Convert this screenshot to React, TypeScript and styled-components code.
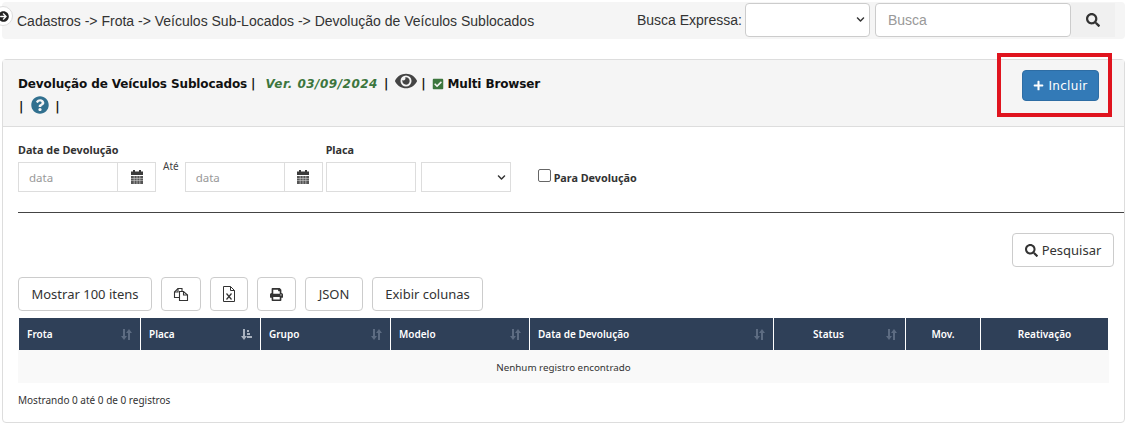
import styled, { createGlobalStyle } from "styled-components";
import {
  FaArrowCircleRight,
  FaCheckSquare,
  FaChevronDown,
  FaEye,
  FaPlus,
  FaPrint,
  FaQuestionCircle,
  FaSearch,
} from "react-icons/fa";

const GlobalStyle = createGlobalStyle`
  html, body {
    margin: 0;
    padding: 0;
    background: #fff;
    overflow: hidden;
  }
  * {
    box-sizing: border-box;
  }
`;

const Page = styled.div`
  position: relative;
  width: 1129px;
  height: 429px;
  padding: 2px 4px 0 2px;
  font-family: "Liberation Sans", Arial, sans-serif;
  color: #333;
`;

// Top breadcrumb bar
const TopBar = styled.div`
  height: 37px;
  background: #f5f5f5;
  border-radius: 4px;
  display: flex;
  align-items: center;
  padding: 0 10px 0 15px;
  font-size: 14px;
`;

const Crumbs = styled.div`
  flex: 1;
`;

const BackBadge = styled.span`
  position: absolute;
  left: -7px;
  top: 6px;
  width: 20px;
  height: 20px;
  border-radius: 50%;
  background: #fff;
  border: 1px solid #ddd;
  display: flex;
  align-items: center;
  justify-content: center;
  font-size: 11px;
  color: #222;
`;

const QuickLabel = styled.span`
  margin-right: 3px;
  margin-top: -2px;
`;

const TopSelect = styled.div`
  width: 125px;
  height: 34px;
  margin-top: -2px;
  background: #fff;
  border: 1px solid #ccc;
  border-radius: 4px;
  display: flex;
  align-items: center;
  justify-content: flex-end;
  padding-right: 4px;
  font-size: 9px;
  color: #333;
`;

const TopInput = styled.div`
  width: 196px;
  height: 34px;
  margin: -2px 0 0 5px;
  background: #fff;
  border: 1px solid #ccc;
  border-radius: 4px;
  padding: 0 12px;
  line-height: 33px;
  color: #999;
`;

const TopSearch = styled.div`
  width: 44px;
  height: 34px;
  margin-top: -2px;
  display: flex;
  align-items: center;
  justify-content: center;
  background: #f0f0f0;
  font-size: 14px;
  color: #333;
`;

// Main panel
const Panel = styled.section`
  margin-top: 20px;
  height: 364px;
  border: 1px solid #ddd;
  border-radius: 4px;
  background: #fff;
`;

const PanelHead = styled.header`
  height: 67px;
  background: #f5f5f5;
  border-bottom: 1px solid #ddd;
  display: flex;
  justify-content: space-between;
  padding: 10px 25px 0 15px;
`;

const TitleArea = styled.div`
  font-family: "DejaVu Sans", Verdana, sans-serif;
  font-size: 12px;
  font-weight: 700;
  color: #111;
  letter-spacing: -0.12px;
  white-space: nowrap;
`;

const TitleRow = styled.div<{ $short?: boolean }>`
  display: flex;
  align-items: center;
  gap: 6px;
  height: ${(p) => (p.$short ? 19 : 27)}px;
  padding-left: ${(p) => (p.$short ? 1 : 0)}px;
`;

const Version = styled.span`
  color: #3c763d;
  font-style: italic;
  letter-spacing: 0.5px;
  margin: 0 0 0 4px;
`;

const EyeIcon = styled(FaEye)`
  font-size: 22px;
  color: #444;
  margin: -6px -2px 0 1px;
`;

const CheckIcon = styled(FaCheckSquare)`
  font-size: 12px;
  color: #3c763d;
  margin: 0 -3px 0 1px;
`;

const HelpIcon = styled(FaQuestionCircle)`
  font-size: 18px;
  color: #31708f;
  margin: -3px 0 0 2px;
`;

const IncludeButton = styled.button`
  width: 77px;
  height: 31px;
  background: #337ab7;
  border: 1px solid #2e6da4;
  border-radius: 4px;
  color: #fff;
  font-family: "DejaVu Sans", Tahoma, sans-serif;
  font-size: 12px;
  letter-spacing: 0.3px;
  display: flex;
  align-items: center;
  justify-content: center;
  gap: 4px;
  padding: 0;

  svg {
    font-size: 11px;
  }
`;

const Highlight = styled.div`
  position: absolute;
  left: 997px;
  top: 53px;
  width: 115px;
  height: 64px;
  border: 4px solid #e0141e;
`;

const PanelBody = styled.div`
  padding: 16px 15px 0;
  font-family: "Noto Sans", Tahoma, sans-serif;
`;

// Filter form
const FilterRow = styled.div`
  display: flex;
  align-items: flex-start;
  height: 70px;
  border-bottom: 1px solid #444;
  margin-right: -15px;
`;

const Field = styled.div<{ $left?: number }>`
  margin-left: ${(p) => p.$left ?? 0}px;
`;

const FieldLabel = styled.div`
  height: 19px;
  font-size: 10.8px;
  font-weight: 700;
  color: #333;
  line-height: 14px;
`;

const InputRow = styled.div`
  display: flex;
`;

const DateText = styled.div`
  width: 99px;
  height: 30px;
  border: 1px solid #ddd;
  border-right: 0;
  color: #999;
  font-size: 11.5px;
  line-height: 29px;
  padding-left: 10px;
`;

const DateAddon = styled.div`
  width: 39px;
  height: 30px;
  border: 1px solid #ddd;
  display: flex;
  align-items: center;
  justify-content: center;
`;

const Until = styled.div`
  margin: 17px 6px 0 7px;
  font-size: 10px;
  line-height: 12px;
  color: #444;
`;

const PlateInput = styled.div`
  width: 90px;
  height: 30px;
  border: 1px solid #ddd;
`;

const PlateSelect = styled.div`
  width: 90px;
  height: 30px;
  margin-left: 5px;
  border: 1px solid #ddd;
  display: flex;
  align-items: center;
  justify-content: flex-end;
  padding-right: 4px;
  font-size: 9px;
  color: #333;
`;

const CheckLabel = styled.label`
  margin: 26px 0 0 27px;
  display: flex;
  align-items: flex-start;
  gap: 3px;
  font-size: 10.8px;
  font-weight: 700;
  color: #333;
  line-height: 18px;
`;

const CheckBox = styled.span`
  width: 13px;
  height: 13px;
  border: 1px solid #666;
  border-radius: 2px;
  background: #fff;
`;

const SearchRow = styled.div`
  display: flex;
  justify-content: flex-end;
  margin: 20px -5px 0 0;
`;

const OutlineButton = styled.button<{ $width?: number }>`
  width: ${(p) => (p.$width ? `${p.$width}px` : "auto")};
  height: 34px;
  background: #fff;
  border: 1px solid #ccc;
  border-radius: 4px;
  padding: 0 12px;
  display: flex;
  align-items: center;
  justify-content: center;
  gap: 4px;
  font-family: "Noto Sans", Tahoma, sans-serif;
  font-size: 13px;
  color: #333;
  white-space: nowrap;

  svg {
    font-size: 13px;
    flex: none;
  }
`;

const Toolbar = styled.div`
  display: flex;
  gap: 9px;
  margin-top: 10px;
`;

// Table
const Table = styled.table`
  width: 1091px;
  margin-top: 7px;
  border-collapse: separate;
  border-spacing: 0;
  table-layout: fixed;
  font-size: 10px;
`;

const HeadCell = styled.th<{ $center?: boolean; $sorted?: boolean }>`
  position: relative;
  height: 32px;
  padding: 0 ${(p) => (p.$center && p.$sorted ? 30 : 8)}px 0 8px;
  background: #2f4058;
  background-clip: padding-box;
  border-left: 1px solid #fff;
  color: #fff;
  font-weight: 600;
  text-align: ${(p) => (p.$center ? "center" : "left")};

  &:last-child {
    border-right: 1px solid #fff;
  }
`;

const SortIcon = styled.svg`
  position: absolute;
  right: 8px;
  top: 11px;
  width: 11px;
  height: 11px;
  fill: #5d6c82;
`;

const EmptyCell = styled.td`
  height: 33px;
  padding-top: 2px;
  background: #f9f9f9;
  text-align: center;
  font-size: 9.8px;
  color: #333;
`;

const Summary = styled.div`
  margin-top: 10px;
  font-size: 10px;
  color: #333;
`;

const SortGlyph = ({ active }: { active?: boolean }) => (
  <SortIcon viewBox="0 0 11 11">
    {active ? (
      <path
        d="M2 0h2v7h2L3 11 0 7h2zM6 1h2v2H6zM6 4h3v2H6zM6 7h5v2H6z"
        fill="#a9b2bf"
      />
    ) : (
      <path d="M2 0h2v7h2L3 11 0 7h2zM7 11h2V4h2L8 0 5 4h2z" />
    )}
  </SortIcon>
);

const CalendarGlyph = () => (
  <svg width="14" height="14" viewBox="0 0 14 14" fill="#3a3a3a">
    <path d="M3 0h2v2H3zM9 0h2v2H9z" />
    <rect x="1" y="1.500" width="12" height="3.500" />
    <path d="M1 6h12v8H1z" fill="#555" />
    <path
      d="M1 8h12v.6H1zM1 10.400h12v.6H1zM3.800 6h.6v8h-.6zM6.700 6h.6v8h-.6zM9.600 6h.6v8h-.6z"
      fill="#ddd"
    />
  </svg>
);

const CopyGlyph = () => (
  <svg width="16" height="16" viewBox="0 0 16 16" fill="none" stroke="#333" strokeWidth="1.100">
    <path d="M6 11.500H1.500V6L5 2.500h4v3" />
    <path d="M5 2.500V6H1.500" />
    <path d="M6.500 5.500h4l4 3.500v5.500h-8z" fill="#fff" />
    <path d="M10.500 5.500V9h4" />
  </svg>
);

const ExcelGlyph = () => (
  <svg width="14" height="16" viewBox="0 0 14 16" fill="none" stroke="#333" strokeWidth="1">
    <path d="M1.500.5h7l4 4v11h-11z" />
    <path d="M8.500.5v4h4" />
    <path d="M4.500 7.500l5 6M9.500 7.500l-5 6" strokeWidth="1.200" />
  </svg>
);

const columns = [
  { label: "Frota", width: 122, sort: true },
  { label: "Placa", width: 120, sort: true, active: true },
  { label: "Grupo", width: 130, sort: true },
  { label: "Modelo", width: 139, sort: true },
  { label: "Data de Devolução", width: 244, sort: true },
  { label: "Status", width: 132, sort: true, center: true },
  { label: "Mov.", width: 75, center: true },
  { label: "Reativação", width: 129, center: true },
];

export default function App() {
  return (
    <Page>
      <GlobalStyle />
      <TopBar>
        <BackBadge>
          <FaArrowCircleRight />
        </BackBadge>
        <Crumbs>Cadastros -&gt; Frota -&gt; Veículos Sub-Locados -&gt; Devolução de Veículos Sublocados</Crumbs>
        <QuickLabel>Busca Expressa:</QuickLabel>
        <TopSelect>
          <FaChevronDown />
        </TopSelect>
        <TopInput>Busca</TopInput>
        <TopSearch>
          <FaSearch />
        </TopSearch>
      </TopBar>

      <Panel>
        <PanelHead>
          <TitleArea>
            <TitleRow>
              Devolução de Veículos Sublocados |<Version>Ver. 03/09/2024</Version>|<EyeIcon />|
              <CheckIcon />
              Multi Browser
            </TitleRow>
            <TitleRow $short>
              |<HelpIcon />|
            </TitleRow>
          </TitleArea>
          <IncludeButton>
            <FaPlus />
            Incluir
          </IncludeButton>
        </PanelHead>

        <PanelBody>
          <FilterRow>
            <Field>
              <FieldLabel>Data de Devolução</FieldLabel>
              <InputRow>
                <DateText>data</DateText>
                <DateAddon>
                  <CalendarGlyph />
                </DateAddon>
              </InputRow>
            </Field>
            <Until>Até</Until>
            <Field>
              <FieldLabel />
              <InputRow>
                <DateText>data</DateText>
                <DateAddon>
                  <CalendarGlyph />
                </DateAddon>
              </InputRow>
            </Field>
            <Field $left={3}>
              <FieldLabel>Placa</FieldLabel>
              <InputRow>
                <PlateInput />
                <PlateSelect>
                  <FaChevronDown />
                </PlateSelect>
              </InputRow>
            </Field>
            <CheckLabel>
              <CheckBox />
              Para Devolução
            </CheckLabel>
          </FilterRow>

          <SearchRow>
            <OutlineButton $width={102}>
              <FaSearch />
              Pesquisar
            </OutlineButton>
          </SearchRow>

          <Toolbar>
            <OutlineButton $width={134}>Mostrar 100 itens</OutlineButton>
            <OutlineButton $width={40}>
              <CopyGlyph />
            </OutlineButton>
            <OutlineButton $width={38}>
              <ExcelGlyph />
            </OutlineButton>
            <OutlineButton $width={39}>
              <FaPrint />
            </OutlineButton>
            <OutlineButton $width={58}>JSON</OutlineButton>
            <OutlineButton $width={111}>Exibir colunas</OutlineButton>
          </Toolbar>

          <Table>
            <colgroup>
              {columns.map((c) => (
                <col key={c.label} width={c.width} />
              ))}
            </colgroup>
            <thead>
              <tr>
                {columns.map((c) => (
                  <HeadCell key={c.label} $center={c.center} $sorted={c.sort}>
                    {c.label}
                    {c.sort && <SortGlyph active={c.active} />}
                  </HeadCell>
                ))}
              </tr>
            </thead>
            <tbody>
              <tr>
                <EmptyCell colSpan={8}>Nenhum registro encontrado</EmptyCell>
              </tr>
            </tbody>
          </Table>
          <Summary>Mostrando 0 até 0 de 0 registros</Summary>
        </PanelBody>
      </Panel>
      <Highlight />
    </Page>
  );
}
